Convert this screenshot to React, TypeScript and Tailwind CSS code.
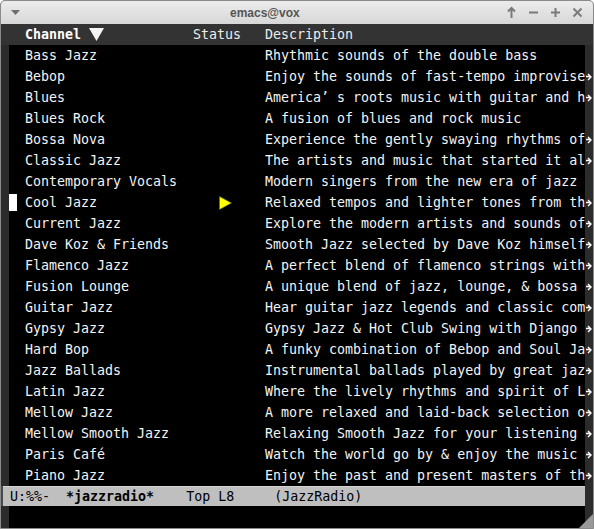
import React from 'react';

// descriptions hold only the 40 columns that fit before the fringe
const channels = [
  ['Bass Jazz', 'Rhythmic sounds of the double bass', false],
  ['Bebop', 'Enjoy the sounds of fast-tempo improvise', true],
  ['Blues', 'America’ s roots music with guitar and h', true],
  ['Blues Rock', 'A fusion of blues and rock music', false],
  ['Bossa Nova', 'Experience the gently swaying rhythms of', true],
  ['Classic Jazz', 'The artists and music that started it al', true],
  ['Contemporary Vocals', 'Modern singers from the new era of jazz', false],
  ['Cool Jazz', 'Relaxed tempos and lighter tones from th', true],
  ['Current Jazz', 'Explore the modern artists and sounds of', true],
  ['Dave Koz & Friends', 'Smooth Jazz selected by Dave Koz himself', true],
  ['Flamenco Jazz', 'A perfect blend of flamenco strings with', true],
  ['Fusion Lounge', 'A unique blend of jazz, lounge, & bossa ', true],
  ['Guitar Jazz', 'Hear guitar jazz legends and classic com', true],
  ['Gypsy Jazz', 'Gypsy Jazz & Hot Club Swing with Django ', true],
  ['Hard Bop', 'A funky combination of Bebop and Soul Ja', true],
  ['Jazz Ballads', 'Instrumental ballads played by great jaz', true],
  ['Latin Jazz', 'Where the lively rhythms and spirit of L', true],
  ['Mellow Jazz', 'A more relaxed and laid-back selection o', true],
  ['Mellow Smooth Jazz', 'Relaxing Smooth Jazz for your listening ', true],
  ['Paris Café', 'Watch the world go by & enjoy the music ', true],
  ['Piano Jazz', 'Enjoy the past and present masters of th', true],
] as const;

const mono = { fontFamily: '"DejaVu Sans Mono", monospace' };

function FringeArrow() {
  return (
    <svg width="6" height="8" viewBox="0 0 6 8" className="mt-[1px]">
      <path d="M0 3.5h4M2 1l3 3-3 3" stroke="#fff" strokeWidth="1.4" fill="none" />
    </svg>
  );
}

function Row({ name, desc, truncated, current }: { name: string; desc: string; truncated: boolean; current: boolean }) {
  return (
    <div className="flex h-[21px]">
      <div className="w-[8px] bg-[#2b2b2b]" />
      <div className="flex w-[576px] items-center whitespace-pre bg-black text-[13.3px] leading-[21px] text-[#f4f4f4]">
        <div className="flex w-[16px] shrink-0 items-center">
          {current && <div className="h-[17px] w-[8px] bg-white" />}
        </div>
        <div className="w-[168px] shrink-0">{name}</div>
        <div className="flex w-[72px] shrink-0 items-center">
          {current && (
            <svg width="13" height="14" viewBox="0 0 13 14" className="ml-[26px]">
              <polygon points="0.5,0.5 12.5,7 0.5,13.5" fill="#ffff00" stroke="#6b6b00" strokeWidth="0.6" />
            </svg>
          )}
        </div>
        <div className="shrink-0">{desc}</div>
      </div>
      <div className="flex w-[8px] items-center justify-center bg-[#2b2b2b]">{truncated && <FringeArrow />}</div>
    </div>
  );
}

export default function App() {
  return (
    <div className="h-[529px] w-[594px] overflow-hidden bg-white" style={mono}>
      <div className="flex h-[529px] w-[594px] flex-col overflow-hidden rounded-t-[5px] border border-[#8a8a8a] bg-[#2b2b2b]">
        {/* title bar */}
        <div className="relative flex h-[23px] shrink-0 items-center bg-gradient-to-b from-[#ececec] to-[#d7d7d7]">
          <svg width="9" height="6" viewBox="0 0 9 6" className="ml-[10px]">
            <polygon points="0,0 9,0 4.5,5" fill="#6e6e6e" />
          </svg>
          <div
            className="ml-[210px] text-[12px] font-bold text-[#555]"
            style={{ fontFamily: '"Liberation Sans", Arial, sans-serif' }}
          >
            emacs@vox
          </div>
          <div className="ml-auto mr-[9px] flex items-center gap-[9px]">
            <svg width="13" height="13" viewBox="0 0 13 13">
              <path d="M6.5 2v10M3 5.5l3.5-3.5 3.5 3.5" stroke="#7a7a7a" strokeWidth="2" fill="none" />
            </svg>
            <svg width="13" height="13" viewBox="0 0 13 13">
              <path d="M2 6.5h9" stroke="#7a7a7a" strokeWidth="2" />
            </svg>
            <svg width="13" height="13" viewBox="0 0 13 13">
              <path d="M2 6.5h9M6.5 2v9" stroke="#7a7a7a" strokeWidth="2" />
            </svg>
            <svg width="13" height="13" viewBox="0 0 13 13">
              <path d="M2.5 2.5l8 8M10.5 2.5l-8 8" stroke="#7a7a7a" strokeWidth="2" />
            </svg>
          </div>
        </div>

        {/* header line */}
        <div className="flex h-[21px] shrink-0 items-center bg-[#333333] text-[13.3px] leading-[21px] text-[#ededed]">
          <div className="w-[24px] shrink-0" />
          <div className="flex w-[168px] shrink-0 items-center font-bold text-white">
            Channel
            <svg width="15" height="13" viewBox="0 0 15 13" className="ml-[8px]">
              <polygon points="0,0 15,0 7.5,13" fill="#f4f4f4" />
            </svg>
          </div>
          <div className="w-[72px] shrink-0">Status</div>
          <div className="shrink-0">Description</div>
        </div>

        {channels.map(([name, desc, truncated], i) => (
          <Row key={name} name={name} desc={desc} truncated={truncated} current={i === 7} />
        ))}

        {/* mode line */}
        <div className="flex h-[20px] shrink-0">
          <div className="w-[2px] bg-[#4a4a4a]" />
          <div className="flex w-[582px] items-center whitespace-pre border-t border-[#d4d4d4] bg-[#bfbfbf] text-[13.3px] text-black">
            <span className="ml-[7px]">U:%%-  </span>
            <span className="font-bold">*jazzradio*</span>
            <span>    Top L8     (JazzRadio)</span>
          </div>
          <div className="w-[8px] bg-[#2b2b2b]" />
        </div>

        {/* minibuffer */}
        <div className="flex flex-1">
          <div className="w-[8px] bg-[#2b2b2b]" />
          <div className="w-[576px] bg-black" />
          <div className="relative w-[8px] bg-[#2b2b2b]">
            <svg width="14" height="14" viewBox="0 0 14 14" className="absolute bottom-0 right-0">
              <polygon points="14,0 14,14 0,14" fill="#9a9a9a" />
            </svg>
          </div>
        </div>
      </div>
    </div>
  );
}
